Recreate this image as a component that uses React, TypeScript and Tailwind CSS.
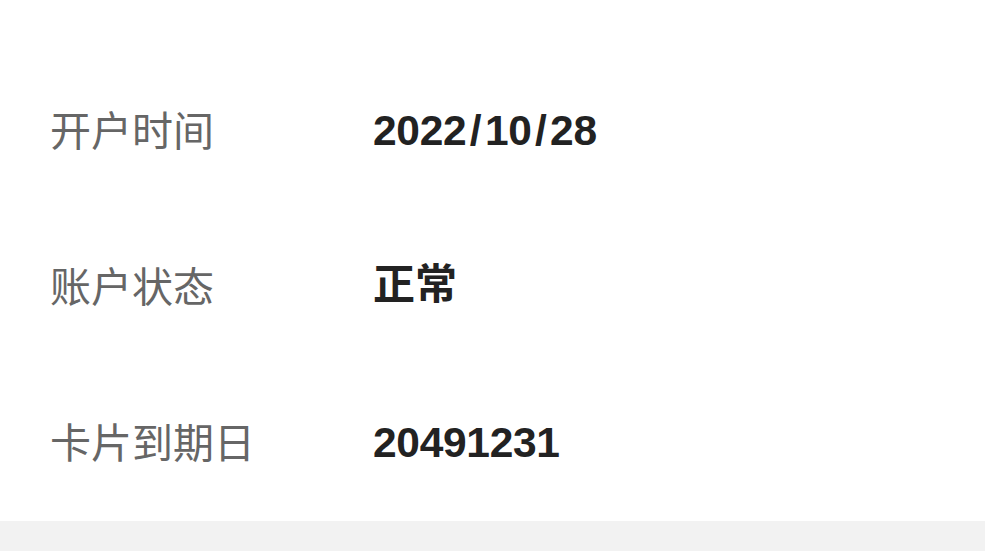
import React from 'react';

const rows = [
  { label: '开户时间', value: '2022/10/28', cjk: false },
  { label: '账户状态', value: '正常', cjk: true },
  { label: '卡片到期日', value: '20491231', cjk: false },
];

function Value({ text }: { text: string }) {
  const parts = text.split('/');
  return (
    <>
      {parts.map((p, i) => (
        <React.Fragment key={i}>
          {i > 0 && <span className="mx-[3.5px]">/</span>}
          {p}
        </React.Fragment>
      ))}
    </>
  );
}

export default function App() {
  return (
    <div className="w-[985px] h-[551px] bg-white flex flex-col overflow-hidden">
      <div className="pt-[53px] pl-[50px]">
        {rows.map((row) => (
          <div key={row.label} className="h-[156px] flex items-center">
            <span
              className="w-[323px] pb-[6px] text-[41px] leading-none text-[#666666]"
              style={{ fontFamily: '"Noto Sans CJK SC", sans-serif' }}
            >
              {row.label}
            </span>
            <span
              className={
                row.cjk
                  ? 'pb-[4px] text-[42px] leading-none font-bold text-[#222222]'
                  : 'text-[42.5px] leading-none font-bold tracking-[-0.3px] text-[#222222]'
              }
              style={{ fontFamily: '"Liberation Sans", "Noto Sans CJK SC", sans-serif' }}
            >
              <Value text={row.value} />
            </span>
          </div>
        ))}
      </div>
      <div className="flex-1 bg-[#f2f2f2]" />
    </div>
  );
}
